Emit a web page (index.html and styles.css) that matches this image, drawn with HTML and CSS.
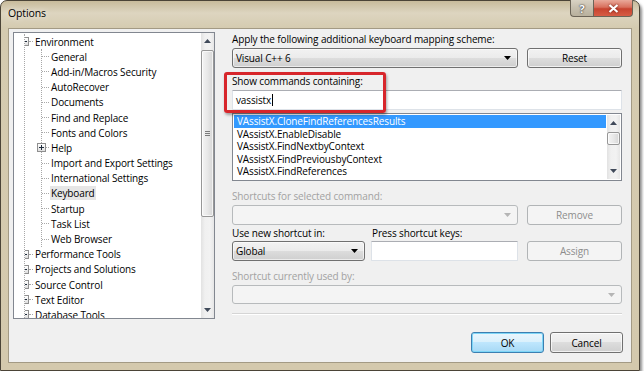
FILE: index.html
```html
<!doctype html>
<html lang="en">
    <head>
        <meta charset="UTF-8" />
        <meta name="viewport" content="width=device-width, initial-scale=1.0" />
        <title>Options</title>
        <link rel="stylesheet" href="styles.css">
    </head>
    <body>
        <div class="window">
            <div class="titlebar">
                <span class="title">Options</span>
                <div class="caption">
                    <span class="cap cap-help">?</span>
                    <span class="cap cap-close">
                        <svg width="11" height="9" viewBox="0 0 11 9"><path d="M1.5 1l8 7M9.5 1l-8 7" stroke="#fff" stroke-width="2.2" /></svg>
                    </span>
                </div>
            </div>

            <div class="client">
                <div class="main">
                    <!-- category tree -->
                    <div class="tree">
                        <ul class="tree-root">
                            <li>
                                <div class="node"><span class="exp"></span><span class="tick"></span><span class="label">Environment</span></div>
                                <ul class="tree-children">
                                    <li class="node"><span class="tick"></span><span class="label">General</span></li>
                                    <li class="node"><span class="tick"></span><span class="label">Add-in/Macros Security</span></li>
                                    <li class="node"><span class="tick"></span><span class="label">AutoRecover</span></li>
                                    <li class="node"><span class="tick"></span><span class="label">Documents</span></li>
                                    <li class="node"><span class="tick"></span><span class="label">Find and Replace</span></li>
                                    <li class="node"><span class="tick"></span><span class="label">Fonts and Colors</span></li>
                                    <li class="node"><span class="exp plus"></span><span class="tick short"></span><span class="label">Help</span></li>
                                    <li class="node"><span class="tick"></span><span class="label">Import and Export Settings</span></li>
                                    <li class="node"><span class="tick"></span><span class="label">International Settings</span></li>
                                    <li class="node"><span class="tick"></span><span class="label selected">Keyboard</span></li>
                                    <li class="node"><span class="tick"></span><span class="label">Startup</span></li>
                                    <li class="node"><span class="tick"></span><span class="label">Task List</span></li>
                                    <li class="node"><span class="tick"></span><span class="label">Web Browser</span></li>
                                </ul>
                            </li>
                            <li class="node"><span class="exp plus"></span><span class="tick"></span><span class="label">Performance Tools</span></li>
                            <li class="node"><span class="exp plus"></span><span class="tick"></span><span class="label">Projects and Solutions</span></li>
                            <li class="node"><span class="exp plus"></span><span class="tick"></span><span class="label">Source Control</span></li>
                            <li class="node"><span class="exp plus"></span><span class="tick"></span><span class="label">Text Editor</span></li>
                            <li class="node"><span class="exp plus"></span><span class="tick"></span><span class="label">Database Tools</span></li>
                        </ul>
                        <div class="vscroll">
                            <div class="sb-arrow"><svg width="7" height="4" viewBox="0 0 7 4"><path d="M0 4L3.5 0L7 4z" fill="#404a5a" /></svg></div>
                            <div class="sb-thumb tree-thumb"><span class="grip"></span></div>
                            <div class="sb-track"></div>
                            <div class="sb-arrow"><svg width="7" height="4" viewBox="0 0 7 4"><path d="M0 0L3.5 4L7 0z" fill="#404a5a" /></svg></div>
                        </div>
                    </div>

                    <!-- keyboard page -->
                    <div class="panel">
                        <div class="lbl">Apply the following additional keyboard mapping scheme:</div>
                        <div class="field-row first">
                            <div class="combo wide">
                                <span>Visual C++ 6</span>
                                <svg width="7" height="4" viewBox="0 0 7 4"><path d="M0 0h7L3.5 4z" fill="#000" /></svg>
                            </div>
                            <div class="btn side">Reset</div>
                        </div>

                        <div class="lbl gap-6">Show commands containing:</div>
                        <div class="textbox full">vassistx<span class="caret"></span></div>

                        <div class="listbox">
                            <ul class="list-items">
                                <li class="selected">VAssistX.CloneFindReferencesResults</li>
                                <li>VAssistX.EnableDisable</li>
                                <li>VAssistX.FindNextbyContext</li>
                                <li>VAssistX.FindPreviousbyContext</li>
                                <li>VAssistX.FindReferences</li>
                            </ul>
                            <div class="vscroll">
                                <div class="sb-arrow"><svg width="7" height="4" viewBox="0 0 7 4"><path d="M0 4L3.5 0L7 4z" fill="#404a5a" /></svg></div>
                                <div class="sb-thumb list-thumb"></div>
                                <div class="sb-track"></div>
                                <div class="sb-arrow"><svg width="7" height="4" viewBox="0 0 7 4"><path d="M0 0L3.5 4L7 0z" fill="#404a5a" /></svg></div>
                            </div>
                        </div>

                        <div class="lbl disabled gap-8">Shortcuts for selected command:</div>
                        <div class="field-row">
                            <div class="combo wide off">
                                <span></span>
                                <svg width="7" height="4" viewBox="0 0 7 4"><path d="M0 0h7L3.5 4z" fill="#b5b5b5" /></svg>
                            </div>
                            <div class="btn side off">Remove</div>
                        </div>

                        <div class="field-row labels gap-7">
                            <div class="lbl scope-lbl">Use new shortcut in:</div>
                            <div class="lbl">Press shortcut keys:</div>
                        </div>
                        <div class="field-row tight">
                            <div class="combo scope">
                                <span>Global</span>
                                <svg width="7" height="4" viewBox="0 0 7 4"><path d="M0 0h7L3.5 4z" fill="#000" /></svg>
                            </div>
                            <div class="textbox keys"></div>
                            <div class="btn side off">Assign</div>
                        </div>

                        <div class="lbl disabled gap-8">Shortcut currently used by:</div>
                        <div class="combo full off short">
                            <span></span>
                            <svg width="7" height="4" viewBox="0 0 7 4"><path d="M0 0h7L3.5 4z" fill="#b5b5b5" /></svg>
                        </div>

                        <div class="separator"></div>

                        <div class="highlight"></div>
                    </div>
                </div>

                <div class="footer">
                    <div class="btn dlg default">OK</div>
                    <div class="btn dlg">Cancel</div>
                </div>
            </div>
        </div>
    </body>
</html>
```

FILE: styles.css
```css
* {
    box-sizing: border-box;
}

body {
    margin: 0;
    background: #fff;
    font-family: "Open Sans", "Noto Sans", sans-serif;
    font-size: 10px;
    letter-spacing: -0.13px;
    color: #000;
}

.window {
    width: 640px;
    height: 371px;
    display: flex;
    flex-direction: column;
    padding: 0 7px 7px 7px;
    border: 1px solid #4b4437;
    border-radius: 7px 7px 0 0;
    background: linear-gradient(180deg, #c8bb9b 0, #ddd5c0 12px, #d5cbb0 27px, #d4c9ad 100%);
    box-shadow: 2px 3px 3px rgba(0, 0, 0, 0.45);
}

/* title bar */
.titlebar {
    height: 27px;
    display: flex;
    justify-content: space-between;
    align-items: flex-start;
}

.title {
    margin-top: 5px;
    font-size: 10.5px;
    line-height: 14px;
    text-shadow: 0 0 6px rgba(255, 255, 255, 0.9);
}

.caption {
    display: flex;
    margin-top: -1px;
    margin-right: -1px;
}

.cap {
    height: 17px;
    display: flex;
    align-items: center;
    justify-content: center;
    border: 1px solid #6b6457;
    border-top: none;
}

.cap-help {
    width: 23px;
    border-radius: 0 0 0 4px;
    border-right: none;
    background: linear-gradient(180deg, #d9d3c4 0, #c6bfae 50%, #b9b19d 100%);
    color: #fff;
    font-weight: bold;
    font-size: 11px;
    text-shadow: 0 0 2px #333, 0 0 1px #333;
}

.cap-close {
    width: 40px;
    border-radius: 0 0 4px 0;
    background: linear-gradient(180deg, #e9a99a 0, #d8705d 45%, #c7432f 55%, #d75d45 100%);
}

.cap-close svg {
    filter: drop-shadow(0 0 1px #6a1a10);
}

/* client area */
.client {
    flex: 1;
    display: flex;
    flex-direction: column;
    padding: 3px 9px 0 4px;
    background: #f0f0f0;
    border: 1px solid #a39a84;
}

.main {
    height: 287px;
    display: flex;
    gap: 17px;
}

/* tree */
.tree {
    width: 202px;
    height: 287px;
    display: flex;
    background: #fff;
    border: 1px solid #828790;
    overflow: hidden;
}

.tree ul {
    list-style: none;
    margin: 0;
    padding: 0;
}

.tree-root {
    flex: 1;
    margin: 1px 0 0 10px !important;
    border-left: 1px dotted #a8a8a8;
    overflow: hidden;
}

.tree-children {
    margin-left: 16px !important;
    border-left: 1px dotted #a8a8a8;
}

.node {
    height: 15.2px;
    display: flex;
    align-items: center;
    white-space: nowrap;
}

.exp {
    position: relative;
    width: 9px;
    height: 9px;
    flex: none;
    margin-left: -5px;
    border: 1px solid #8f8f8f;
    background: linear-gradient(180deg, #fff 0, #dedede 100%);
}

.exp::before {
    content: "";
    position: absolute;
    left: 1px;
    top: 3px;
    width: 5px;
    height: 1px;
    background: #1e2b3c;
}

.exp.plus::after {
    content: "";
    position: absolute;
    left: 3px;
    top: 1px;
    width: 1px;
    height: 5px;
    background: #1e2b3c;
}

.tick {
    width: 4px;
    margin-right: 2px;
    border-top: 1px dotted #a8a8a8;
    flex: none;
}

.tree-children .tick {
    width: 7px;
}

.tree-children .tick.short {
    width: 3px;
}

.label {
    line-height: 14px;
}

.label.selected {
    background: #e6e6e6;
    padding: 0 1px;
    margin-left: -1px;
}

/* scrollbars */
.vscroll {
    width: 13px;
    flex: none;
    display: flex;
    flex-direction: column;
    background: linear-gradient(90deg, #e2e2e2 0, #f0f0f0 30%, #f2f2f2 70%, #e6e6e6 100%);
}

.sb-arrow {
    height: 16px;
    display: flex;
    align-items: center;
    justify-content: center;
    flex: none;
}

.sb-thumb {
    flex: none;
    margin: 1px 0 0 0;
    display: flex;
    align-items: center;
    justify-content: center;
    border: 1px solid #979797;
    border-radius: 2px;
    background: linear-gradient(90deg, #f4f4f4 0, #e8e8e8 50%, #d6d6d6 100%);
    box-shadow: inset 0 0 0 1px rgba(255, 255, 255, 0.7);
}

.tree-thumb {
    height: 167px;
}

.list-thumb {
    height: 13px;
}

.grip {
    width: 5px;
    height: 5px;
    border-top: 1px solid #7b7b7b;
    border-bottom: 1px solid #7b7b7b;
    background: linear-gradient(180deg, transparent 1px, #7b7b7b 1px, #7b7b7b 2px, transparent 2px);
}

.sb-track {
    flex: 1;
}

/* keyboard page */
.panel {
    position: relative;
    width: 390px;
    display: flex;
    flex-direction: column;
}

.lbl {
    height: 15px;
    line-height: 15px;
    white-space: nowrap;
}

.lbl.disabled {
    color: #a2a2a2;
}

.gap-6 {
    margin-top: 6px;
}

.gap-7 {
    margin-top: 7px;
}

.gap-8 {
    margin-top: 8px;
}

.field-row {
    display: flex;
    gap: 9px;
    margin-top: 1px;
}

.field-row.tight {
    margin-top: 0;
}

.field-row.labels {
    gap: 0;
}

.scope-lbl {
    width: 140px;
}

.combo {
    height: 20px;
    display: flex;
    align-items: center;
    justify-content: space-between;
    padding: 0 6px 0 3px;
    border: 1px solid #707070;
    border-radius: 3px;
    background: linear-gradient(180deg, #f2f2f2 0, #ebebeb 50%, #dddddd 50%, #cfcfcf 100%);
    box-shadow: inset 0 0 0 1px rgba(255, 255, 255, 0.6);
}

.combo.wide {
    width: 286px;
}

.combo.full {
    width: 390px;
}

.combo.short {
    margin-top: 1px;
    height: 19px;
}

.combo.scope {
    width: 133px;
    margin-right: -3px;
}

.combo.off {
    border-color: #b7babc;
    background: #f4f4f4;
    box-shadow: none;
}

.btn {
    height: 20px;
    display: flex;
    align-items: center;
    justify-content: center;
    border: 1px solid #707070;
    border-radius: 3px;
    background: linear-gradient(180deg, #f2f2f2 0, #ebebeb 50%, #dddddd 50%, #cfcfcf 100%);
    box-shadow: inset 0 0 0 1px rgba(255, 255, 255, 0.7);
}

.btn.side {
    width: 95px;
}

.btn.off {
    color: #8d8d8d;
    border-color: #b1b4b6;
    background: #f4f4f4;
    box-shadow: none;
}

.textbox {
    height: 20px;
    display: flex;
    align-items: center;
    padding-left: 3px;
    background: #fff;
    border: 1px solid #dde2e8;
    border-top-color: #abadb3;
    border-radius: 1px;
}

.textbox.full {
    width: 390px;
    margin-top: 1px;
}

.textbox.keys {
    width: 147px;
}

.caret {
    width: 1px;
    height: 12px;
    margin-left: 1px;
    background: #000;
}

.listbox {
    height: 68px;
    margin-top: 3px;
    display: flex;
    padding: 1px;
    background: #fff;
    border: 1px solid #828790;
}

.list-items {
    flex: 1;
    list-style: none;
    margin: 0;
    padding: 0;
}

.list-items li {
    height: 12.5px;
    line-height: 12.5px;
    padding-left: 3px;
    white-space: nowrap;
}

.list-items li.selected {
    background: #3399ff;
    color: #fff;
    margin-right: 1px;
}

.separator {
    margin-top: 9px;
    height: 1px;
    background: #d5d5d5;
    box-shadow: 0 1px 0 #fff;
}

/* annotation drawn over the screenshot */
.highlight {
    position: absolute;
    left: -8px;
    top: 40px;
    width: 162px;
    height: 41px;
    border: 3px solid #d7262b;
    border-radius: 3px;
    box-shadow: 1px 2px 3px rgba(0, 0, 0, 0.35);
}

/* dialog buttons */
.footer {
    display: flex;
    justify-content: flex-end;
    gap: 6px;
    margin-top: 13px;
    margin-right: -1px;
}

.btn.dlg {
    width: 73px;
    height: 21px;
}

.btn.default {
    border-color: #3c7fb1;
    background: linear-gradient(180deg, #eaf6fd 0, #d9f0fc 50%, #bee6fd 50%, #a7d9f5 100%);
    box-shadow: inset 0 0 0 1px #7ed6f7;
}
```
